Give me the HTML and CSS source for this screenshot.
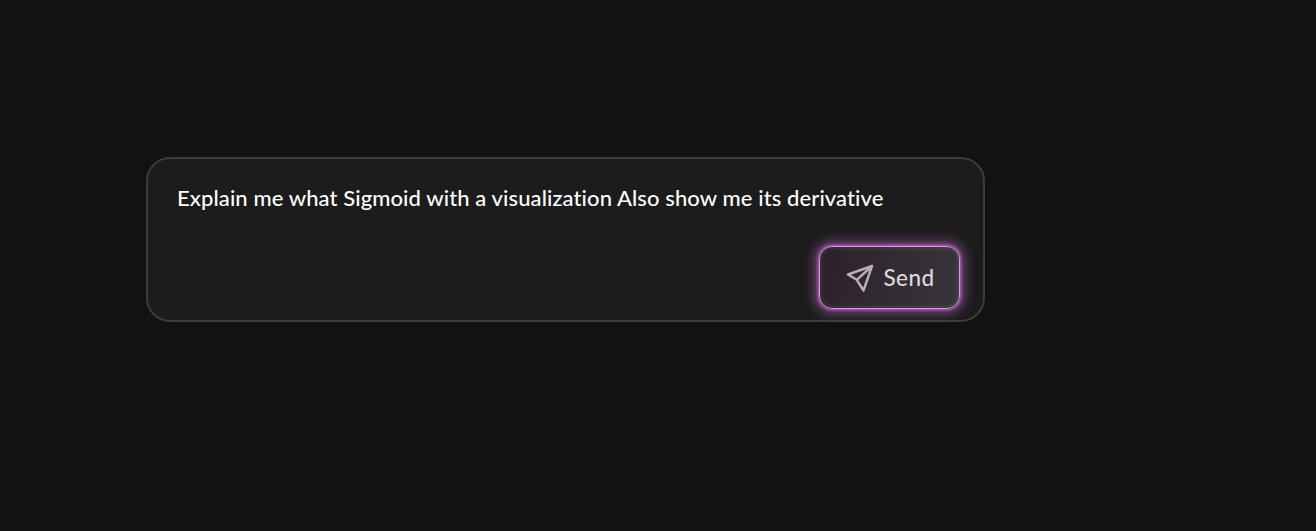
FILE: index.html
```html
<!DOCTYPE html>
<html lang="en">
<head>
<meta charset="utf-8">
<title>Prompt</title>
<link rel="stylesheet" href="styles.css">
</head>
<body>
<main class="composer">
  <p class="prompt">Explain me what Sigmoid with a visualization Also show me its derivative</p>
  <div class="actions">
    <button class="send" type="button">
      <svg class="send-icon" width="28" height="28" viewBox="0 0 28 28" fill="none" stroke="currentColor" stroke-width="2.400" stroke-linejoin="round" stroke-linecap="round">
        <path d="M26 2 L2 10.500 L10.800 15.800 L17.500 26.500 Z"/>
        <path d="M26 2 L10.800 15.800"/>
      </svg>
      <span class="send-label">Send</span>
    </button>
  </div>
</main>
</body>
</html>
```
FILE: styles.css
```css
* { box-sizing: border-box; }
html, body { height: 100%; }
body {
  margin: 0;
  background: #121212;
  padding: 157px 0 0 146px;
  font-family: "Lato", "Liberation Sans", sans-serif;
  font-variant-ligatures: none;
  overflow: hidden;
}
.composer {
  width: 839px;
  height: 165px;
  background: #1c1c1c;
  border: 2px solid #3c3c3c;
  border-radius: 24px;
  padding: 25px 23px 11px 29px;
  display: flex;
  flex-direction: column;
  justify-content: space-between;
}
.prompt {
  margin: 0;
  color: #ffffff;
  font-size: 22px;
  font-weight: 500;
  letter-spacing: 0.1px;
  line-height: 28px;
  white-space: nowrap;
}
.actions { display: flex; justify-content: flex-end; }
.send {
  width: 141px;
  height: 63px;
  display: flex;
  align-items: center;
  justify-content: center;
  gap: 10px;
  padding: 0 0 0 1px;
  border: 1.500px solid #e391ec;
  border-radius: 13px;
  color: #dcd8de;
  font-family: inherit;
  background: linear-gradient(100deg, #2c2029 0%, #332c33 55%, #37353a 100%);
  box-shadow: 0 0 3px 1px rgba(205, 110, 215, 0.8), 0 0 12px 4px rgba(200, 110, 210, 0.55), inset 0 0 0 3px rgba(255, 255, 255, 0.05);
}
.send-label {
  font-size: 22.500px;
  font-weight: 500;
  letter-spacing: 0.4px;
}
.send-icon { color: #b9aeb9; flex: none; }
```
